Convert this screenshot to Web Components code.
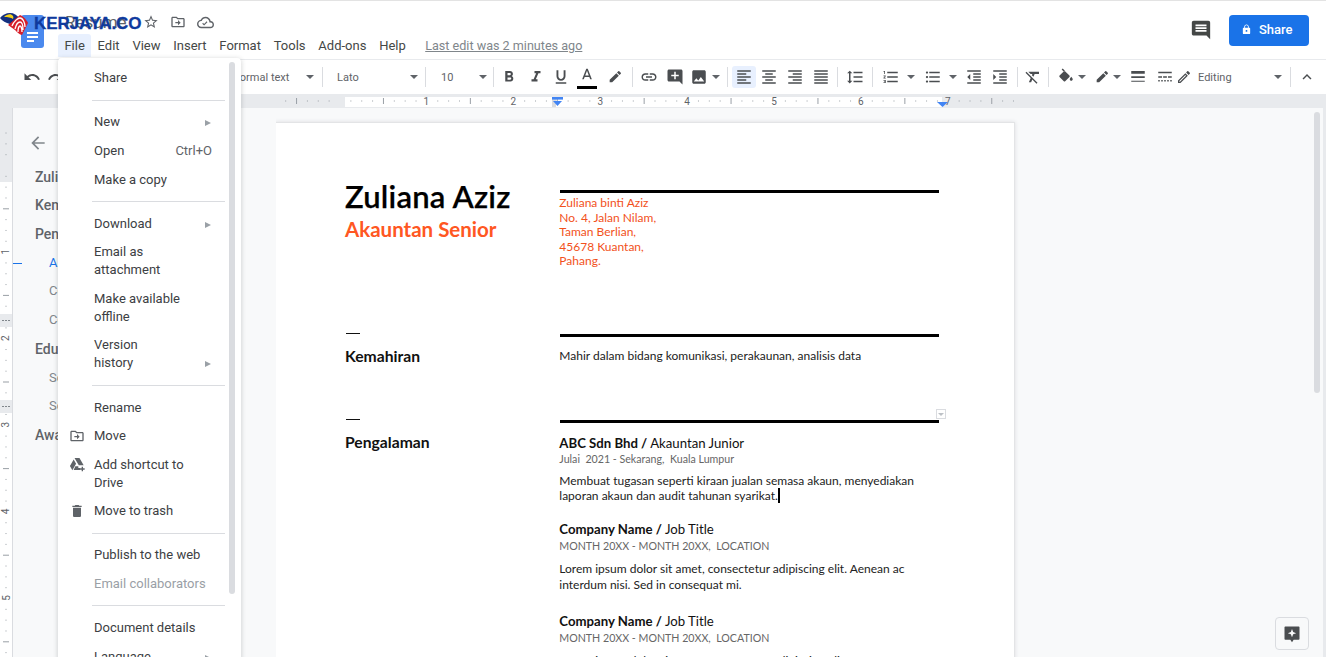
<!DOCTYPE html>
<html>
<head>
<meta charset="utf-8">
<title>Resume - Google Docs</title>
<style>
  html, body { margin: 0; height: 100%; overflow: hidden; background: #f8f9fa; }
</style>
</head>
<body>
<docs-app>
  <docs-header></docs-header>
  <docs-toolbar></docs-toolbar>
  <docs-ruler></docs-ruler>
  <docs-vruler slot="main"></docs-vruler>
  <docs-outline slot="main"></docs-outline>
  <docs-canvas slot="main">
    <docs-page>
      <resume-section>
        <span slot="label"><resume-title></resume-title></span>
        <resume-address></resume-address>
      </resume-section>
      <resume-section dash style="margin-top:65px" label="Kemahiran">
        <div style="font-size:12px;line-height:16px;padding-top:11px;color:#222">Mahir dalam bidang komunikasi, perakaunan, analisis data</div>
      </resume-section>
      <resume-section dash style="margin-top:54px" label="Pengalaman">
        <resume-job company="ABC Sdn Bhd" role="Akauntan Junior" meta="Julai  2021 - Sekarang,  Kuala Lumpur" style="--lh:14.3px;--top:10px;--mt:-1px">Membuat tugasan seperti kiraan jualan semasa akaun, menyediakan laporan akaun dan audit tahunan syarikat.<span style="display:inline-block;width:2px;height:15px;background:#000;vertical-align:-3px"></span></resume-job>
        <resume-job company="Company Name" role="Job Title" meta="MONTH 20XX - MONTH 20XX,  LOCATION" style="--top:16.4px">Lorem ipsum dolor sit amet, consectetur adipiscing elit. Aenean ac interdum nisi. Sed in consequat mi.</resume-job>
        <resume-job company="Company Name" role="Job Title" meta="MONTH 20XX - MONTH 20XX,  LOCATION" style="--top:18px">Lorem ipsum dolor sit amet, consectetur adipiscing elit. Aenean ac interdum nisi. Sed in consequat mi.</resume-job>
      </resume-section>
    </docs-page>
  </docs-canvas>
  <docs-file-menu slot="over"></docs-file-menu>
  <kerjaya-logo slot="over"></kerjaya-logo>
</docs-app>

<script>
// material icons, 24 box
const ICONS = {
  undo: 'M12.5 8c-2.65 0-5.05.99-6.9 2.6L2 7v9h9l-3.62-3.62c1.39-1.16 3.16-1.88 5.12-1.88 3.54 0 6.55 2.31 7.6 5.5l2.37-.78C21.08 11.03 17.15 8 12.5 8z',
  redo: 'M18.4 10.6C16.55 8.99 14.15 8 11.5 8c-4.65 0-8.58 3.03-9.96 7.22L3.9 16c1.05-3.19 4.05-5.5 7.6-5.5 1.95 0 3.73.72 5.12 1.88L13 16h9V7l-3.6 3.6z',
  bold: 'M15.6 10.79c.97-.67 1.65-1.77 1.65-2.79 0-2.26-1.75-4-4-4H7v14h7.04c2.09 0 3.71-1.7 3.71-3.79 0-1.52-.86-2.82-2.15-3.42zM10 6.5h3c.83 0 1.5.67 1.5 1.5s-.67 1.5-1.5 1.5h-3v-3zm3.5 9H10v-3h3.5c.83 0 1.5.67 1.5 1.5s-.67 1.5-1.5 1.5z',
  italic: 'M10 4v3h2.21l-3.42 8H6v3h8v-3h-2.21l3.42-8H18V4z',
  underline: 'M12 17c3.31 0 6-2.69 6-6V3h-2.5v8c0 1.93-1.57 3.5-3.5 3.5S8.5 12.93 8.5 11V3H6v8c0 3.31 2.69 6 6 6zm-7 2v2h14v-2H5z',
  textcolor: 'M11 1L5.5 15h2.25l1.12-3h6.25l1.12 3h2.25L13 1h-2zM9.62 10L12 3.67 14.38 10H9.62z',
  brush: 'M17.75 10L14 6.25l-10 10V20h3.75l10-10zm2.96-2.96c.39-.39.39-1.02 0-1.41l-2.34-2.34c-.39-.39-1.02-.39-1.41 0L15 5.25 18.75 9l1.96-1.96z',
  link: 'M3.9 12c0-1.71 1.39-3.1 3.1-3.1h4V7H7c-2.76 0-5 2.24-5 5s2.24 5 5 5h4v-1.9H7c-1.71 0-3.1-1.39-3.1-3.1zM8 13h8v-2H8v2zm9-6h-4v1.9h4c1.71 0 3.1 1.39 3.1 3.1s-1.39 3.1-3.1 3.1h-4V17h4c2.76 0 5-2.24 5-5s-2.24-5-5-5z',
  addcomment: 'M22 4c0-1.1-.9-2-2-2H4c-1.1 0-2 .9-2 2v12c0 1.1.9 2 2 2h14l4 4V4zm-5 7h-4v4h-2v-4H7V9h4V5h2v4h4v2z',
  image: 'M21 19V5c0-1.1-.9-2-2-2H5c-1.1 0-2 .9-2 2v14c0 1.1.9 2 2 2h14c1.1 0 2-.9 2-2zM8.5 13.5l2.5 3.01L14.5 12l4.5 6H5l3.5-4.5z',
  left: 'M15 15H3v2h12v-2zm0-8H3v2h12V7zM3 13h18v-2H3v2zm0 8h18v-2H3v2zM3 3v2h18V3H3z',
  center: 'M7 15v2h10v-2H7zm-4 6h18v-2H3v2zm0-8h18v-2H3v2zm4-6v2h10V7H7zM3 3v2h18V3H3z',
  right: 'M3 21h18v-2H3v2zm6-4h12v-2H9v2zm-6-4h18v-2H3v2zm6-4h12V7H9v2zM3 3v2h18V3H3z',
  justify: 'M3 21h18v-2H3v2zm0-4h18v-2H3v2zm0-4h18v-2H3v2zm0-4h18V7H3v2zm0-6v2h18V3H3z',
  spacing: 'M6 7h2.5L5 3.5 1.5 7H4v10H1.5L5 20.5 8.5 17H6V7zm4-2v2h12V5H10zm0 14h12v-2H10v2zm0-6h12v-2H10v2z',
  numlist: 'M2 17h2v.5H3v1h1v.5H2v1h3v-4H2v1zm1-9h1V4H2v1h1v3zm-1 3h1.8L2 13.1v.9h3v-1H3.2L5 10.9V10H2v1zm5-6v2h14V5H7zm0 14h14v-2H7v2zm0-6h14v-2H7v2z',
  bullets: 'M4 10.5c-.83 0-1.5.67-1.5 1.5s.67 1.5 1.5 1.5 1.5-.67 1.5-1.5-.67-1.5-1.5-1.5zm0-6c-.83 0-1.5.67-1.5 1.5S3.17 7.5 4 7.5 5.5 6.83 5.5 6 4.83 4.5 4 4.5zm0 12c-.83 0-1.5.68-1.5 1.5s.68 1.5 1.5 1.5 1.5-.68 1.5-1.5-.67-1.5-1.5-1.5zM7 19h14v-2H7v2zm0-6h14v-2H7v2zm0-8v2h14V5H7z',
  outdent: 'M11 17h10v-2H11v2zm-8-5l4 4V8l-4 4zm0 9h18v-2H3v2zM3 3v2h18V3H3zm8 6h10V7H11v2zm0 4h10v-2H11v2z',
  indent: 'M3 21h18v-2H3v2zM3 8v8l4-4-4-4zm8 9h10v-2H11v2zM3 3v2h18V3H3zm8 6h10V7H11v2zm0 4h10v-2H11v2z',
  clear: 'M3.27 5L2 6.27l6.97 6.97L6.5 19h3l1.57-3.66L16.73 21 18 19.73 3.55 5.27 3.27 5zM6 5v.18L8.82 8h2.4l-.72 1.68 2.1 2.1L14.21 8H20V5H6z',
  fill: 'M10 3.6L3.4 10.1c-.5.5-.5 1.3 0 1.8l5.7 5.7c.5.5 1.3.5 1.8 0l5.7-5.7c.5-.5.5-1.3 0-1.8L10 3.6zM7.6.5L6.2 1.9l3 3 1.4-1.4zM19 11.5s-2 2.17-2 3.5c0 1.1.9 2 2 2s2-.9 2-2c0-1.33-2-3.5-2-3.5z',
  weight: 'M3 4h18v3.500H3zM3 11h18v2.200H3zM3 17h18v1.200H3z',
  dash: 'M3 5h18v2H3zM3 11h5v2H3zM9.500 11h5v2h-5zM16 11h5v2h-5zM3 16h2v2H3zM7 16h2v2H7zM11 16h2v2h-2zM15 16h2v2h-2zM19 16h2v2h-2z',
  pencil: 'M14.06 9.02l.92.92L5.92 19H5v-.92l9.06-9.06M17.66 3c-.25 0-.51.1-.7.29l-1.83 1.83 3.75 3.75 1.83-1.83c.39-.39.39-1.02 0-1.41l-2.34-2.34c-.2-.2-.45-.29-.71-.29zm-3.6 3.19L3 17.25V21h3.75L17.81 9.94l-3.75-3.75z',
  chevron: 'M7.41 15.41L12 10.83l4.59 4.58L18 14l-6-6-6 6z',
  star: 'M22 9.24l-7.19-.62L12 2 9.19 8.63 2 9.24l5.46 4.73L5.82 21 12 17.27 18.18 21l-1.63-7.03L22 9.24zM12 15.4l-3.76 2.27 1-4.28-3.32-2.88 4.38-.38L12 6.1l1.71 4.04 4.38.38-3.32 2.88 1 4.28L12 15.4z',
  move: 'M20 6h-8l-2-2H4c-1.1 0-1.99.9-1.99 2L2 18c0 1.1.9 2 2 2h16c1.1 0 2-.9 2-2V8c0-1.1-.9-2-2-2zm0 12H4V6h5.17l2 2H20v10zm-8-4H8v-2h4V9l4 4-4 4v-3z',
  cloud: 'M19.35 10.04C18.67 6.59 15.64 4 12 4 9.11 4 6.6 5.64 5.35 8.04 2.34 8.36 0 10.91 0 14c0 3.31 2.69 6 6 6h13c2.76 0 5-2.24 5-5 0-2.64-2.05-4.78-4.65-4.96zM19 18H6c-2.21 0-4-1.79-4-4s1.79-4 4-4h.71C7.37 7.69 9.48 6 12 6c3.04 0 5.5 2.46 5.5 5.5v.5H19c1.66 0 3 1.34 3 3s-1.34 3-3 3zM10 16.2l-2.6-2.6 1.1-1.1 1.5 1.5 3.6-3.6 1.1 1.1z',
  comment: 'M21.99 4c0-1.1-.89-2-1.99-2H4c-1.1 0-2 .9-2 2v12c0 1.1.9 2 2 2h14l4 4-.01-18zM18 14H6v-2h12v2zm0-3H6V9h12v2zm0-3H6V6h12v2z',
  lock: 'M18 8h-1V6c0-2.76-2.24-5-5-5S7 3.24 7 6v2H6c-1.1 0-2 .9-2 2v10c0 1.1.9 2 2 2h12c1.1 0 2-.9 2-2V10c0-1.1-.9-2-2-2zm-6 9c-1.1 0-2-.9-2-2s.9-2 2-2 2 .9 2 2-.9 2-2 2zm3.1-9H8.9V6c0-1.71 1.39-3.1 3.1-3.1 1.71 0 3.1 1.39 3.1 3.1v2z',
  trash: 'M6 19c0 1.1.9 2 2 2h8c1.1 0 2-.9 2-2V7H6v12zM19 4h-3.5l-1-1h-5l-1 1H5v2h14V4z',
  back: 'M20 11H7.83l5.59-5.59L12 4l-8 8 8 8 1.41-1.41L7.83 13H20v-2z',
  drive: 'M8.3 3h7.4l6.3 11h-7.3zM7 5.2l3.6 6.3L5 21.2l-3.6-6.2zM9.500 15.500h4.500V18h2.500v3H7zM19 16h2v2.500h2.500v2H21V23h-2v-2.500h-2.500v-2H19z',
  spark: 'M4 3h16c.6 0 1 .4 1 1v14c0 .6-.4 1-1 1h-6l-2 3-2-3H4c-.6 0-1-.4-1-1V4c0-.6.4-1 1-1zm8 3l-1.4 3.600L7 11l3.600 1.400L12 16l1.400-3.600L17 11l-3.600-1.400z'
};

function icon(name, size, color) {
  return `<svg width="${size}" height="${size}" viewBox="0 0 24 24" fill="${color || '#4a4d50'}" fill-rule="evenodd" style="display:block;flex:none"><path d="${ICONS[name]}"/></svg>`;
}

const caretTri = `<svg width="8" height="4" viewBox="0 0 8 4" style="display:block;flex:none"><path d="M0 0h8L4 4z" fill="#5f6368"/></svg>`;

class DocsApp extends HTMLElement {
  connectedCallback() {
    this.attachShadow({ mode: 'open' });
    this.shadowRoot.innerHTML = `
      <style>
        :host { display: flex; flex-direction: column; position: relative; width: 100%; height: 100vh; overflow: hidden; font-family: Roboto, "Liberation Sans", sans-serif; }
        .main { flex: 1; display: flex; min-height: 0; }
        .edge { width: 3px; flex: none; background: #e8eaed; }
      </style>
      <slot></slot>
      <div class="main"><slot name="main"></slot><div class="edge"></div></div>
      <slot name="over"></slot>
    `;
  }
}

class DocsHeader extends HTMLElement {
  connectedCallback() {
    const menus = ['File', 'Edit', 'View', 'Insert', 'Format', 'Tools', 'Add-ons', 'Help'];
    this.attachShadow({ mode: 'open' });
    this.shadowRoot.innerHTML = `
      <style>
        :host { display: flex; height: 58px; border-top: 1px solid #e3e3e3; background: #fff; padding-left: 21px; padding-right: 17px; }
        .logo { width: 23px; height: 33px; margin-top: 14px; margin-right: 14px; background: #4a89ee; border-radius: 3px; display: flex; flex-direction: column; gap: 2.5px; padding: 17px 6px 0; box-sizing: border-box; flex: none; }
        .logo i { display: block; height: 1.5px; background: #fff; }
        .logo i:last-child { width: 7px; }
        .col { display: flex; flex-direction: column; padding-top: 9px; }
        .title { display: flex; align-items: center; height: 24px; padding-left: 7px; }
        .title span { font-size: 17px; color: #5f6368; width: 78px; }
        .title svg { margin-right: 11px; }
        .menus { display: flex; align-items: center; height: 23px; font-size: 13px; color: #444746; }
        .menus span { padding: 0 6.4px; line-height: 23px; }
        .menus span.on { background: #e8f0fe; border-radius: 3px 3px 0 0; }
        .menus a { margin-left: 13px; color: #80868b; text-decoration: underline; font-size: 12.6px; }
        .side { margin-left: auto; display: flex; align-items: flex-start; padding-top: 14px; }
        .cm { margin-top: 4px; margin-right: 17px; }
        .share { width: 80px; height: 31px; padding-bottom: 2px; background: #1a73e8; border-radius: 4px; color: #fff; font-size: 13px; font-weight: 500; display: flex; align-items: center; gap: 7px; padding-left: 12px; box-sizing: border-box; }
      </style>
      <div class="logo"><i></i><i></i><i></i></div>
      <div class="col">
        <div class="title"><span>Resume</span>${icon('star', 16, '#5f6368')}${icon('move', 16, '#5f6368')}${icon('cloud', 17, '#5f6368')}</div>
        <div class="menus">${menus.map((m, i) => `<span class="${i ? '' : 'on'}">${m}</span>`).join('')}<a>Last edit was 2 minutes ago</a></div>
      </div>
      <div class="side"><div class="cm">${icon('comment', 22, '#444746')}</div><div class="share">${icon('lock', 11, '#fff')}<span>Share</span></div></div>
    `;
  }
}

class DocsToolbar extends HTMLElement {
  connectedCallback() {
    // numbers are gaps, strings are name:width
    const items = [20, 'undo:24', 'redo:24', 164, 'sel:90:Normal text:8', 'sep', 14, 'sel:88:Lato:7', 'sep', 15, 'sel:52:10:6', 'sep',
      'bold:30', 'italic:24', 'underline:26', 'textcolor:26', 'brush:29', 3, 'sep',
      'link:31', 'addcomment:22', 'image:26', 'caret:7', 8, 'sep', 4,
      'left:24', 'center:26', 'right:26', 'justify:26', 3, 'sep', 'spacing:34', 'sep', 7,
      'numlist:22', 5, 'caret:8', 7, 'bullets:22', 5, 'caret:8', 6, 'outdent:22', 4, 'indent:22', 6, 'sep',
      'clear:30', 'sep', 6, 'fill:22', 1, 'caret:8', 5, 'brush:22', 'caret:8', 6, 'weight:22', 5, 'dash:22', 'pencil:16', 6, 'sel:92:Editing:8', 'sep', 5, 'chevron:22'];
    const html = items.map(it => {
      if (typeof it === 'number') return `<i style="width:${it}px"></i>`;
      if (it === 'sep') return '<b></b>';
      const [name, w, label, pad] = it.split(':');
      if (name === 'caret') return `<div class="ic" style="width:${w}px">${caretTri}</div>`;
      if (name === 'sel') return `<div class="sel" style="width:${w}px;padding-right:${pad}px"><span>${label}</span>${caretTri}</div>`;
      const on = name === 'left' ? ' on' : '';
      const extra = name === 'textcolor' ? '<u></u>' : '';
      const size = (name === 'pencil' || name === 'brush') ? 16 : 18;
      return `<div class="ic${on}" style="width:${w}px">${icon(name, size)}${extra}</div>`;
    }).join('');
    this.attachShadow({ mode: 'open' });
    this.shadowRoot.innerHTML = `
      <style>
        :host { display: flex; align-items: center; height: 34px; border-top: 1px solid #e8eaed; background: #fff; flex: none; }
        i { display: block; flex: none; }
        b { display: block; flex: none; width: 1px; height: 20px; background: #dadce0; }
        .ic { flex: none; height: 22px; display: flex; align-items: center; justify-content: center; position: relative; }
        .ic.on { background: #e8f0fe; border-radius: 3px; }
        .ic u { position: absolute; left: 3px; right: 3px; bottom: -1px; height: 3px; background: #000; }
        .sel { flex: none; display: flex; align-items: center; justify-content: space-between; box-sizing: border-box; font-size: 11px; color: #5f6368; }
      </style>
      ${html}
    `;
  }
}

class DocsRuler extends HTMLElement {
  connectedCallback() {
    const inch = 86.9, x0 = 339.5;
    let ticks = '', nums = '';
    for (let i = -8; i <= 62; i++) {
      const x = x0 + i * inch / 8;
      if (x < 276 || x > 1014) continue;
      if (i % 8 === 0) {
        const n = i / 8;
        if (n >= 1 && n <= 7) nums += `<text x="${x}" y="10.5" text-anchor="middle" font-size="10" fill="#5f6368" font-family="Roboto, sans-serif">${n}</text>`;
      } else if (i % 4 === 0) {
        ticks += `<rect x="${x}" y="4" width="1" height="6" fill="#9aa0a6"/>`;
      } else {
        ticks += `<rect x="${x}" y="6.5" width="1" height="1" fill="#9aa0a6"/>`;
      }
    }
    this.attachShadow({ mode: 'open' });
    this.shadowRoot.innerHTML = `
      <style>:host { display: block; height: 14px; flex: none; background: #e8eaed; } svg { display: block; }</style>
      <svg width="1326" height="14">
        <rect x="345" y="3" width="597" height="10" fill="#fff"/>
        ${ticks}${nums}
        <rect x="552" y="3" width="4" height="10" fill="#dadce0"/>
        <path d="M552 3h11v2.6h-11z" fill="#4285f4"/>
        <path d="M553 7h9l-4.5 5z" fill="#4285f4"/>
        <path d="M937 8h11l-5.5 5z" fill="#4285f4"/>
      </svg>
    `;
  }
}

class DocsVRuler extends HTMLElement {
  connectedCallback() {
    const inch = 86.6, y0 = 165 - 108;
    let ticks = '', nums = '';
    for (let i = -5; i <= 48; i++) {
      const y = y0 + i * inch / 8;
      if (y < 14) continue;
      if (i % 8 === 0) {
        const n = i / 8;
        if (n >= 1) nums += `<text x="6" y="${y}" text-anchor="middle" dominant-baseline="central" font-size="10" fill="#5f6368" font-family="Roboto, sans-serif" transform="rotate(-90 6 ${y})">${n}</text>`;
      } else if (i % 4 === 0) {
        ticks += `<rect x="3" y="${y}" width="6" height="1" fill="#9aa0a6"/>`;
      } else {
        ticks += `<rect x="5.5" y="${y}" width="1" height="1" fill="#9aa0a6"/>`;
      }
    }
    this.attachShadow({ mode: 'open' });
    this.shadowRoot.innerHTML = `
      <style>:host { display: block; width: 12px; flex: none; border-right: 1px solid #dadce0; background: #fff; } svg { display: block; }</style>
      <svg width="12" height="549">
        <rect width="12" height="74" fill="#e8eaed"/>
        ${ticks}${nums}
        <rect y="206" width="12" height="13" fill="#e8eaed"/>
        <rect y="292" width="12" height="13" fill="#e8eaed"/>
        <path d="M2 212h2v1H2zM5 212h2v1H5zM8 212h2v1H8zM2 298h2v1H2zM5 298h2v1H5zM8 298h2v1H8z" fill="#80868b"/>
      </svg>
    `;
  }
}

class DocsOutline extends HTMLElement {
  connectedCallback() {
    // only the ends that stick out past the open file menu
    const rows = [['Zuli', 1], ['Kem', 1], ['Pen', 1], ['A', 2, 'on'], ['Co', 2], ['Co', 2], ['Edu', 1], ['Sc', 2], ['Sc', 2], ['Awa', 1]];
    this.attachShadow({ mode: 'open' });
    this.shadowRoot.innerHTML = `
      <style>
        :host { display: block; width: 263px; flex: none; position: relative; overflow: hidden; padding-top: 25px; box-sizing: border-box; }
        .back { margin-left: 15px; margin-bottom: 9.7px; }
        .r { height: 28.7px; line-height: 28.7px; white-space: nowrap; color: #5f6368; }
        .l1 { padding-left: 22px; font-size: 14px; font-weight: 500; }
        .l2 { padding-left: 36px; font-size: 13px; color: #80868b; position: relative; }
        .on { color: #1a73e8; }
        .on::before { content: ''; position: absolute; left: 0; top: 14px; width: 9px; height: 1.5px; background: #1a73e8; }
      </style>
      <div class="back">${icon('back', 20, '#80868b')}</div>
      ${rows.map(r => `<div class="r l${r[1]} ${r[2] || ''}">${r[0]}</div>`).join('')}
    `;
  }
}

class DocsCanvas extends HTMLElement {
  connectedCallback() {
    this.attachShadow({ mode: 'open' });
    this.shadowRoot.innerHTML = `
      <style>
        :host { display: block; flex: 1; position: relative; overflow: hidden; padding-top: 15px; background: #f8f9fa; }
        .thumb { position: absolute; right: 3px; top: 4px; width: 6px; height: 281px; border-radius: 3px; background: #dadce0; }
        .spark { position: absolute; right: 14px; top: 509px; width: 34px; height: 33px; box-sizing: border-box; border: 1px solid #dadce0; border-radius: 4px; background: #f8f9fa; display: flex; align-items: center; justify-content: center; }
      </style>
      <slot></slot>
      <div class="thumb"></div>
      <div class="spark">${icon('spark', 20, '#4a4d50')}</div>
    `;
  }
}

class DocsPage extends HTMLElement {
  connectedCallback() {
    this.attachShadow({ mode: 'open' });
    this.shadowRoot.innerHTML = `
      <style>
        :host { display: block; position: relative; width: 738px; height: 800px; box-sizing: border-box; padding: 57px 0 0 69px; background: #fff; box-shadow: 0 0 0 .75pt #e3e4e6, 0 0 3pt .75pt #dcdde0; font-family: Lato, "Liberation Sans", sans-serif; color: #000; }
        .mark { position: absolute; left: 660px; top: 286px; width: 10px; height: 10px; box-sizing: border-box; border: 1px solid #dadce0; display: flex; align-items: center; justify-content: center; background: #fff; }
        .mark::before { content: ''; border: 3px solid transparent; border-top-color: #bdc1c6; border-bottom: 0; }
      </style>
      <slot></slot>
      <div class="mark"></div>
    `;
  }
}

class ResumeSection extends HTMLElement {
  connectedCallback() {
    const label = this.getAttribute('label');
    const dash = this.hasAttribute('dash');
    this.attachShadow({ mode: 'open' });
    this.shadowRoot.innerHTML = `
      <style>
        :host { display: grid; grid-template-columns: 215px 379px; }
        .dash { width: 14px; height: 1px; background: #111; margin-top: -1px; margin-left: 1px; }
        .label { font-size: 15.7px; font-weight: 700; line-height: 20px; margin-top: 12px; color: #111; }
        .right { border-top: 3px solid #000; ${dash ? '' : 'margin-top: 10px;'} }
        .in { margin-left: -.7px; }
      </style>
      <div class="left">
        ${dash ? '<div class="dash"></div>' : ''}
        ${label ? `<div class="label">${label}</div>` : ''}
        <slot name="label"></slot>
      </div>
      <div class="right"><div class="in"><slot></slot></div></div>
    `;
  }
}

class ResumeTitle extends HTMLElement {
  connectedCallback() {
    this.attachShadow({ mode: 'open' });
    this.shadowRoot.innerHTML = `
      <style>
        :host { display: block; }
        .n { font-size: 31px; letter-spacing: .2px; line-height: 33px; font-weight: 600; color: #000; -webkit-text-stroke: .25px #000; }
        .s { font-size: 20.5px; line-height: 26px; margin-top: 3px; font-weight: 700; color: #ff5722; }
      </style>
      <div class="n">Zuliana Aziz</div>
      <div class="s">Akauntan Senior</div>
    `;
  }
}

class ResumeAddress extends HTMLElement {
  connectedCallback() {
    this.attachShadow({ mode: 'open' });
    this.shadowRoot.innerHTML = `
      <style>:host { display: block; padding-top: 3px; font-size: 12px; line-height: 14.5px; color: #f2511b; }</style>
      Zuliana binti Aziz<br>No. 4, Jalan Nilam,<br>Taman Berlian,<br>45678 Kuantan,<br>Pahang.
    `;
  }
}

class ResumeJob extends HTMLElement {
  connectedCallback() {
    this.attachShadow({ mode: 'open' });
    this.shadowRoot.innerHTML = `
      <style>
        :host { display: block; padding-top: var(--top, 0); }
        .h { font-size: 13.2px; line-height: 20px; color: #111; }
        .h b { font-weight: 700; }
        .m { font-size: 10.65px; line-height: 14px; color: #666; white-space: pre; margin-top: var(--mt, 0); }
        .p { font-size: 12px; line-height: var(--lh, 16px); color: #222; margin-top: 8px; }
      </style>
      <div class="h"><b>${this.getAttribute('company')} /</b> ${this.getAttribute('role')}</div>
      <div class="m">${this.getAttribute('meta')}</div>
      <div class="p"><slot></slot></div>
    `;
  }
}

class DocsMenuItem extends HTMLElement {
  connectedCallback() {
    const ic = this.getAttribute('icon');
    const key = this.getAttribute('key');
    const arrow = this.hasAttribute('arrow');
    this.attachShadow({ mode: 'open' });
    this.shadowRoot.innerHTML = `
      <style>
        :host { display: flex; position: relative; padding: 5.3px 29px 5.3px 36px; line-height: 18px; font-size: 13px; color: #3c4043; }
        :host([disabled]) { color: #9aa0a6; }
        .t { flex: 1; white-space: nowrap; }
        .ic { position: absolute; left: 11px; top: 6px; }
        .k { color: #5f6368; }
        .a { align-self: flex-end; margin-bottom: 5px; margin-right: 1px; width: 0; height: 0; border: 3.5px solid transparent; border-left: 6px solid #9aa0a6; border-right: 0; }
      </style>
      ${ic ? `<div class="ic">${icon(ic, 16, '#5f6368')}</div>` : ''}
      <div class="t"><slot></slot></div>
      ${key ? `<div class="k">${key}</div>` : ''}
      ${arrow ? '<div class="a"></div>' : ''}
    `;
  }
}

class DocsMenuSep extends HTMLElement {
  connectedCallback() {
    this.attachShadow({ mode: 'open' });
    this.shadowRoot.innerHTML = `<style>:host { display: block; height: 1px; margin: 7px 16px 7.5px 34px; background: #dadce0; }</style>`;
  }
}

class DocsFileMenu extends HTMLElement {
  connectedCallback() {
    this.attachShadow({ mode: 'open' });
    this.shadowRoot.innerHTML = `
      <style>
        :host { display: block; position: absolute; left: 58px; top: 58px; width: 183px; height: 620px; box-sizing: border-box; padding-top: 6px; background: #fff; border-radius: 4px; box-shadow: 0 1px 4px 1px rgba(60,64,67,.18); overflow: hidden; z-index: 5; font-family: Roboto, "Liberation Sans", sans-serif; }
        .thumb { position: absolute; right: 6px; top: 4px; width: 6px; height: 532px; border-radius: 3px; background: #dadce0; }
      </style>
      <div class="thumb"></div>
      <docs-menu-item>Share</docs-menu-item>
      <docs-menu-sep></docs-menu-sep>
      <docs-menu-item arrow>New</docs-menu-item>
      <docs-menu-item key="Ctrl+O">Open</docs-menu-item>
      <docs-menu-item>Make a copy</docs-menu-item>
      <docs-menu-sep></docs-menu-sep>
      <docs-menu-item arrow>Download</docs-menu-item>
      <docs-menu-item>Email as<br>attachment</docs-menu-item>
      <docs-menu-item>Make available<br>offline</docs-menu-item>
      <docs-menu-item arrow>Version<br>history</docs-menu-item>
      <docs-menu-sep></docs-menu-sep>
      <docs-menu-item>Rename</docs-menu-item>
      <docs-menu-item icon="move">Move</docs-menu-item>
      <docs-menu-item icon="drive">Add shortcut to<br>Drive</docs-menu-item>
      <docs-menu-item icon="trash">Move to trash</docs-menu-item>
      <docs-menu-sep></docs-menu-sep>
      <docs-menu-item>Publish to the web</docs-menu-item>
      <docs-menu-item disabled>Email collaborators</docs-menu-item>
      <docs-menu-sep></docs-menu-sep>
      <docs-menu-item>Document details</docs-menu-item>
      <docs-menu-item arrow>Language</docs-menu-item>
    `;
  }
}

class KerjayaLogo extends HTMLElement {
  connectedCallback() {
    this.attachShadow({ mode: 'open' });
    this.shadowRoot.innerHTML = `
      <style>
        :host { display: flex; align-items: center; position: absolute; left: 0; top: 12px; height: 25px; z-index: 6; }
        svg { display: block; }
        span { font: 700 17px "Liberation Sans", sans-serif; color: #0f3a9e; margin-left: 6px; margin-top: -1px; letter-spacing: -.1px; -webkit-text-stroke: .3px #0f3a9e; }
      </style>
      <svg width="28" height="25" viewBox="0 0 28 25">
        <path d="M0 6C2 3 6 1 10 1c4 0 7 2 9 5l-9 6C6 11 2 9 0 6z" fill="#14307f"/>
        <path d="M4 5C6 3 9 2 11 2.500 13 3 14 5 13 7 11 5.500 8 5 4 5z" fill="#f5d31c"/>
        <path d="M8 13L20 3c3 1 7 5 8 8l-6 12c-2 0-5-3-7-5z" fill="#d81f2a"/>
        <path d="M12 14C14 9 18 6 20 6c3 0 5 5 5 9M15 17c1-4 3-7 5-7 2 0 3 4 3 8M18 20c0-3 1-6 2-6 1 0 2 3 2 6" stroke="#fff" stroke-width="1.300" fill="none"/>
      </svg>
      <span>KERJAYA.CO</span>
    `;
  }
}

customElements.define('docs-app', DocsApp);
customElements.define('docs-header', DocsHeader);
customElements.define('docs-toolbar', DocsToolbar);
customElements.define('docs-ruler', DocsRuler);
customElements.define('docs-vruler', DocsVRuler);
customElements.define('docs-outline', DocsOutline);
customElements.define('docs-canvas', DocsCanvas);
customElements.define('docs-page', DocsPage);
customElements.define('resume-section', ResumeSection);
customElements.define('resume-title', ResumeTitle);
customElements.define('resume-address', ResumeAddress);
customElements.define('resume-job', ResumeJob);
customElements.define('docs-menu-item', DocsMenuItem);
customElements.define('docs-menu-sep', DocsMenuSep);
customElements.define('docs-file-menu', DocsFileMenu);
customElements.define('kerjaya-logo', KerjayaLogo);
</script>
</body>
</html>
